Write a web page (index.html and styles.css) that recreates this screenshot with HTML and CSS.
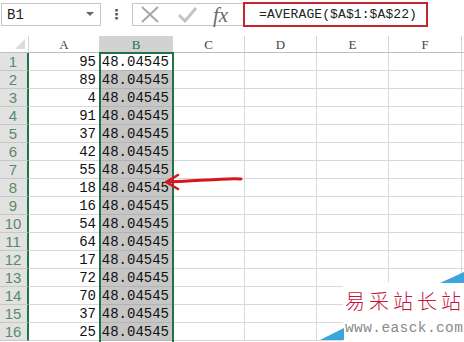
FILE: index.html
```html
<!DOCTYPE html>
<html>
<head>
<meta charset="utf-8">
<link rel="stylesheet" href="styles.css">
</head>
<body>
<div class="app">
  <div class="toolbar">
    <div class="namebox"><span class="ref">B1</span><span class="caret"></span></div>
    <div class="dots">⋮</div>
    <div class="fxbox">
      <svg class="ico" width="22" height="22" viewBox="0 0 22 22"><path d="M3 3 L19 18 M19 3 L3 18" stroke="#a8a8a8" stroke-width="2" fill="none"/></svg>
      <svg class="ico" width="22" height="22" viewBox="0 0 22 22"><path d="M2 11 L8 17 L19 4" stroke="#c4c4c4" stroke-width="3" fill="none"/></svg>
      <span class="fx">fx</span>
    </div>
    <div class="formula">=AVERAGE($A$1:$A$22)</div>
  </div>
  <div class="sheet">
    <div class="grid">
      <div class="corner"><span class="tri"></span></div>
      <div class="colhead">A</div>
      <div class="colhead sel">B</div>
      <div class="colhead">C</div>
      <div class="colhead">D</div>
      <div class="colhead">E</div>
      <div class="colhead">F</div>
      <div class="colhead"></div>

      <div class="rowhead">1</div><div class="cell num">95</div><div class="cell b active">48.04545</div><div class="cell"></div><div class="cell"></div><div class="cell"></div><div class="cell"></div><div class="cell"></div>
      <div class="rowhead">2</div><div class="cell num">89</div><div class="cell b">48.04545</div><div class="cell"></div><div class="cell"></div><div class="cell"></div><div class="cell"></div><div class="cell"></div>
      <div class="rowhead">3</div><div class="cell num">4</div><div class="cell b">48.04545</div><div class="cell"></div><div class="cell"></div><div class="cell"></div><div class="cell"></div><div class="cell"></div>
      <div class="rowhead">4</div><div class="cell num">91</div><div class="cell b">48.04545</div><div class="cell"></div><div class="cell"></div><div class="cell"></div><div class="cell"></div><div class="cell"></div>
      <div class="rowhead">5</div><div class="cell num">37</div><div class="cell b">48.04545</div><div class="cell"></div><div class="cell"></div><div class="cell"></div><div class="cell"></div><div class="cell"></div>
      <div class="rowhead">6</div><div class="cell num">42</div><div class="cell b">48.04545</div><div class="cell"></div><div class="cell"></div><div class="cell"></div><div class="cell"></div><div class="cell"></div>
      <div class="rowhead">7</div><div class="cell num">55</div><div class="cell b">48.04545</div><div class="cell"></div><div class="cell"></div><div class="cell"></div><div class="cell"></div><div class="cell"></div>
      <div class="rowhead">8</div><div class="cell num">18</div><div class="cell b">48.04545</div><div class="cell"></div><div class="cell"></div><div class="cell"></div><div class="cell"></div><div class="cell"></div>
      <div class="rowhead">9</div><div class="cell num">16</div><div class="cell b">48.04545</div><div class="cell"></div><div class="cell"></div><div class="cell"></div><div class="cell"></div><div class="cell"></div>
      <div class="rowhead">10</div><div class="cell num">54</div><div class="cell b">48.04545</div><div class="cell"></div><div class="cell"></div><div class="cell"></div><div class="cell"></div><div class="cell"></div>
      <div class="rowhead">11</div><div class="cell num">64</div><div class="cell b">48.04545</div><div class="cell"></div><div class="cell"></div><div class="cell"></div><div class="cell"></div><div class="cell"></div>
      <div class="rowhead">12</div><div class="cell num">17</div><div class="cell b">48.04545</div><div class="cell"></div><div class="cell"></div><div class="cell"></div><div class="cell"></div><div class="cell"></div>
      <div class="rowhead">13</div><div class="cell num">72</div><div class="cell b">48.04545</div><div class="cell"></div><div class="cell"></div><div class="cell"></div><div class="cell"></div><div class="cell"></div>
      <div class="rowhead">14</div><div class="cell num">70</div><div class="cell b">48.04545</div><div class="cell"></div><div class="cell"></div><div class="cell"></div><div class="cell"></div><div class="cell"></div>
      <div class="rowhead">15</div><div class="cell num">37</div><div class="cell b">48.04545</div><div class="cell"></div><div class="cell"></div><div class="cell"></div><div class="cell"></div><div class="cell"></div>
      <div class="rowhead">16</div><div class="cell num">25</div><div class="cell b">48.04545</div><div class="cell"></div><div class="cell"></div><div class="cell"></div><div class="cell"></div><div class="cell"></div>
    </div>
    <div class="selection"></div>
    <svg class="arrow" width="90" height="24" viewBox="0 0 90 24">
      <path d="M78 6 C66 5 56 7 44 7 C32 7 22 9 4 9" stroke="#d8141c" stroke-width="3" fill="none" stroke-linecap="round"/>
      <path d="M15 2 L3 9 L15 16" stroke="#d8141c" stroke-width="2.6" fill="none" stroke-linecap="round" stroke-linejoin="round"/>
    </svg>
    <div class="watermark">
      <svg class="wm-tri top" width="24" height="11" viewBox="0 0 24 11"><polygon points="0,11 24,11 24,0" fill="#3aa6dc"/></svg>
      <div class="wm-cn">易采站长站</div>
      <div class="wm-url">www.easck.com</div>
      <svg class="wm-tri bottom" width="24" height="12" viewBox="0 0 24 12"><polygon points="0,12 24,12 24,0" fill="#3aa6dc"/></svg>
    </div>
  </div>
</div>
</body>
</html>
```

FILE: styles.css
```css
* { box-sizing: border-box; }
html, body { margin: 0; padding: 0; background: #fff; }
.app {
  width: 464px;
  height: 342px;
  overflow: hidden;
  position: relative;
  font-family: "Liberation Mono", "DejaVu Sans Mono", monospace;
}
.toolbar {
  height: 36px;
  display: flex;
  align-items: flex-start;
  background: #fff;
}
.namebox {
  margin: 3px 0 0 1px;
  width: 100px;
  height: 23px;
  border: 1px solid #c6c6c6;
  display: flex;
  align-items: center;
  justify-content: space-between;
  padding: 0 6px 0 5px;
  font-size: 14px;
  color: #222;
}
.caret {
  width: 0; height: 0;
  border-left: 4px solid transparent;
  border-right: 4px solid transparent;
  border-top: 4px solid #666;
  margin-top: -2px;
}
.dots {
  width: 31px;
  text-align: center;
  font-family: "DejaVu Sans", sans-serif;
  font-size: 14px;
  line-height: 28px;
  color: #555;
  font-weight: bold;
}
.fxbox {
  margin-top: 3px;
  width: 111px;
  height: 23px;
  border: 1px solid #c6c6c6;
  border-right: none;
  display: flex;
  align-items: center;
  padding-left: 6px;
  gap: 16px;
}
.ico { flex: none; }
.fx {
  font-family: "Liberation Serif", serif;
  font-style: italic;
  font-size: 21px;
  color: #6a6a6a;
  margin-left: -2px;
  line-height: 20px;
}
.formula {
  margin-top: 2px;
  width: 185px;
  height: 25px;
  border: 2px solid #c2272d;
  padding-left: 14px;
  font-size: 13px;
  letter-spacing: 0.1px;
  line-height: 21px;
  color: #222;
  white-space: nowrap;
}
.sheet { position: relative; }
.grid {
  display: grid;
  grid-template-columns: 29px 71px 73px 72px 72px 72px 73px 12px;
  grid-template-rows: 17px repeat(16, 18px);
}
.corner {
  background: #fff;
  border-right: 1px solid #d4d4d4;
  border-bottom: 1px solid #bfbfbf;
  position: relative;
}
.tri {
  position: absolute;
  right: 3px; bottom: 3px;
  width: 0; height: 0;
  border-left: 10px solid transparent;
  border-bottom: 10px solid #dcdcdc;
}
.colhead {
  background: #fff;
  border-right: 1px solid #d4d4d4;
  border-bottom: 1px solid #bfbfbf;
  text-align: center;
  font-family: "Liberation Serif", serif;
  font-size: 13px;
  line-height: 17px;
  color: #444;
}
.colhead.sel {
  background: #d2d2d2;
  color: #217346;
}
.rowhead {
  background: #e2e2e2;
  border-right: 2px solid #217346;
  border-bottom: 1px solid #c8c8c8;
  text-align: center;
  font-family: "Liberation Sans", sans-serif;
  font-size: 15px;
  line-height: 18px;
  color: #5a8a6c;
  padding-right: 1px;
}
.cell {
  border-right: 1px solid #d9d9d9;
  border-bottom: 1px solid #d9d9d9;
  font-size: 14px;
  line-height: 18px;
  color: #111;
  white-space: nowrap;
  text-align: right;
  padding-right: 3px;
}
.cell.b {
  background: #c6c6c6;
  border-bottom-color: #b4b4b4;
  padding-right: 3px;
}
.cell.b.active { background: #fff; }
.selection {
  position: absolute;
  left: 99px;
  top: 16px;
  width: 75px;
  height: 320px;
  border: 2px solid #217346;
  pointer-events: none;
}
.arrow {
  position: absolute;
  left: 163px;
  top: 137px;
}
.watermark {
  position: absolute;
  left: 343px;
  top: 246px;
  width: 121px;
  height: 60px;
  background: #fff;
}
.wm-tri.top {
  position: absolute;
  right: 0;
  top: -10px;
}
.wm-tri.bottom {
  position: absolute;
  left: -23px;
  bottom: 2px;
}
.wm-cn {
  margin-top: 6px;
  padding-left: 2px;
  font-family: "Noto Sans CJK SC", sans-serif;
  font-weight: 300;
  font-size: 20px;
  line-height: 26px;
  letter-spacing: 4px;
  color: #c8143a;
  white-space: nowrap;
}
.wm-url {
  margin-top: 4px;
  padding-left: 2px;
  font-family: "Liberation Mono", monospace;
  font-size: 14.5px;
  letter-spacing: 0.4px;
  line-height: 20px;
  color: #8a8a8a;
  white-space: nowrap;
}
```
